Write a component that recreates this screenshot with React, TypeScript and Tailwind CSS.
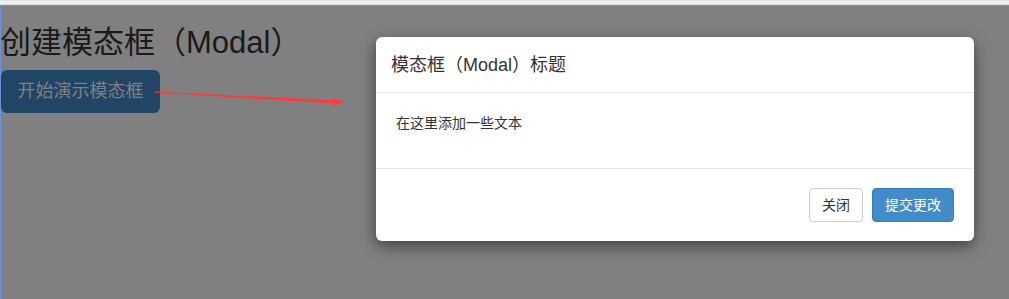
const cjk = '"Liberation Sans", "Noto Sans CJK SC", sans-serif';

function Arrow() {
  return (
    <svg className="absolute left-0 top-0 pointer-events-none" width={400} height={140} viewBox="0 0 400 140">
      <polygon points="154,91.4 154,92.6 335,103.6 335,100.4" fill="#ff3a3a" />
      <polygon points="332,97.5 344,102 332,106.5 334,102" fill="#ff3a3a" />
    </svg>
  );
}

function Modal() {
  return (
    <div className="absolute left-[376px] top-[37px] w-[598px] rounded-[6px] bg-white shadow-[0_5px_15px_rgba(0,0,0,0.5)] text-[#333333]">
      <div className="border-b border-[#e5e5e5] px-[15px] h-[56px] flex items-center">
        <h4 className="text-[18px] leading-[26px]">模态框（Modal）标题</h4>
      </div>
      <div className="p-[20px] text-[14px] leading-[20px]">在这里添加一些文本</div>
      <div className="mt-[15px] border-t border-[#e5e5e5] pt-[19px] pb-[19px] px-[20px] flex justify-end gap-[9px]">
        <button className="h-[34px] px-[12px] rounded-[4px] border border-[#cccccc] bg-white text-[14px] text-[#333333]">
          关闭
        </button>
        <button className="h-[34px] px-[12px] rounded-[4px] border border-[#357ebd] bg-[#428bca] text-[14px] text-white">
          提交更改
        </button>
      </div>
    </div>
  );
}

export default function App() {
  return (
    <div className="relative w-[1009px] h-[299px] overflow-hidden bg-[#808080]" style={{ fontFamily: cjk }}>
      <div className="h-[4px] bg-[#f0f0f0] border-t border-[#e3e3e3]" />
      <div className="h-[1px] bg-[#dcdcdc]" />
      <div className="h-[1px] bg-[#6e92d4]" />
      <div className="relative h-[293px] border-l border-[#6e92d4]">
        <h2 className="pt-[20px] text-[31px] leading-[33px] text-[#1a1a1a] -ml-[1px]">创建模态框（Modal）</h2>
        <button className="mt-[11px] h-[43px] w-[159px] rounded-[6px] bg-[#214565] text-[18px] text-[#808080]">
          开始演示模态框
        </button>
      </div>
      <Arrow />
      <Modal />
    </div>
  );
}
